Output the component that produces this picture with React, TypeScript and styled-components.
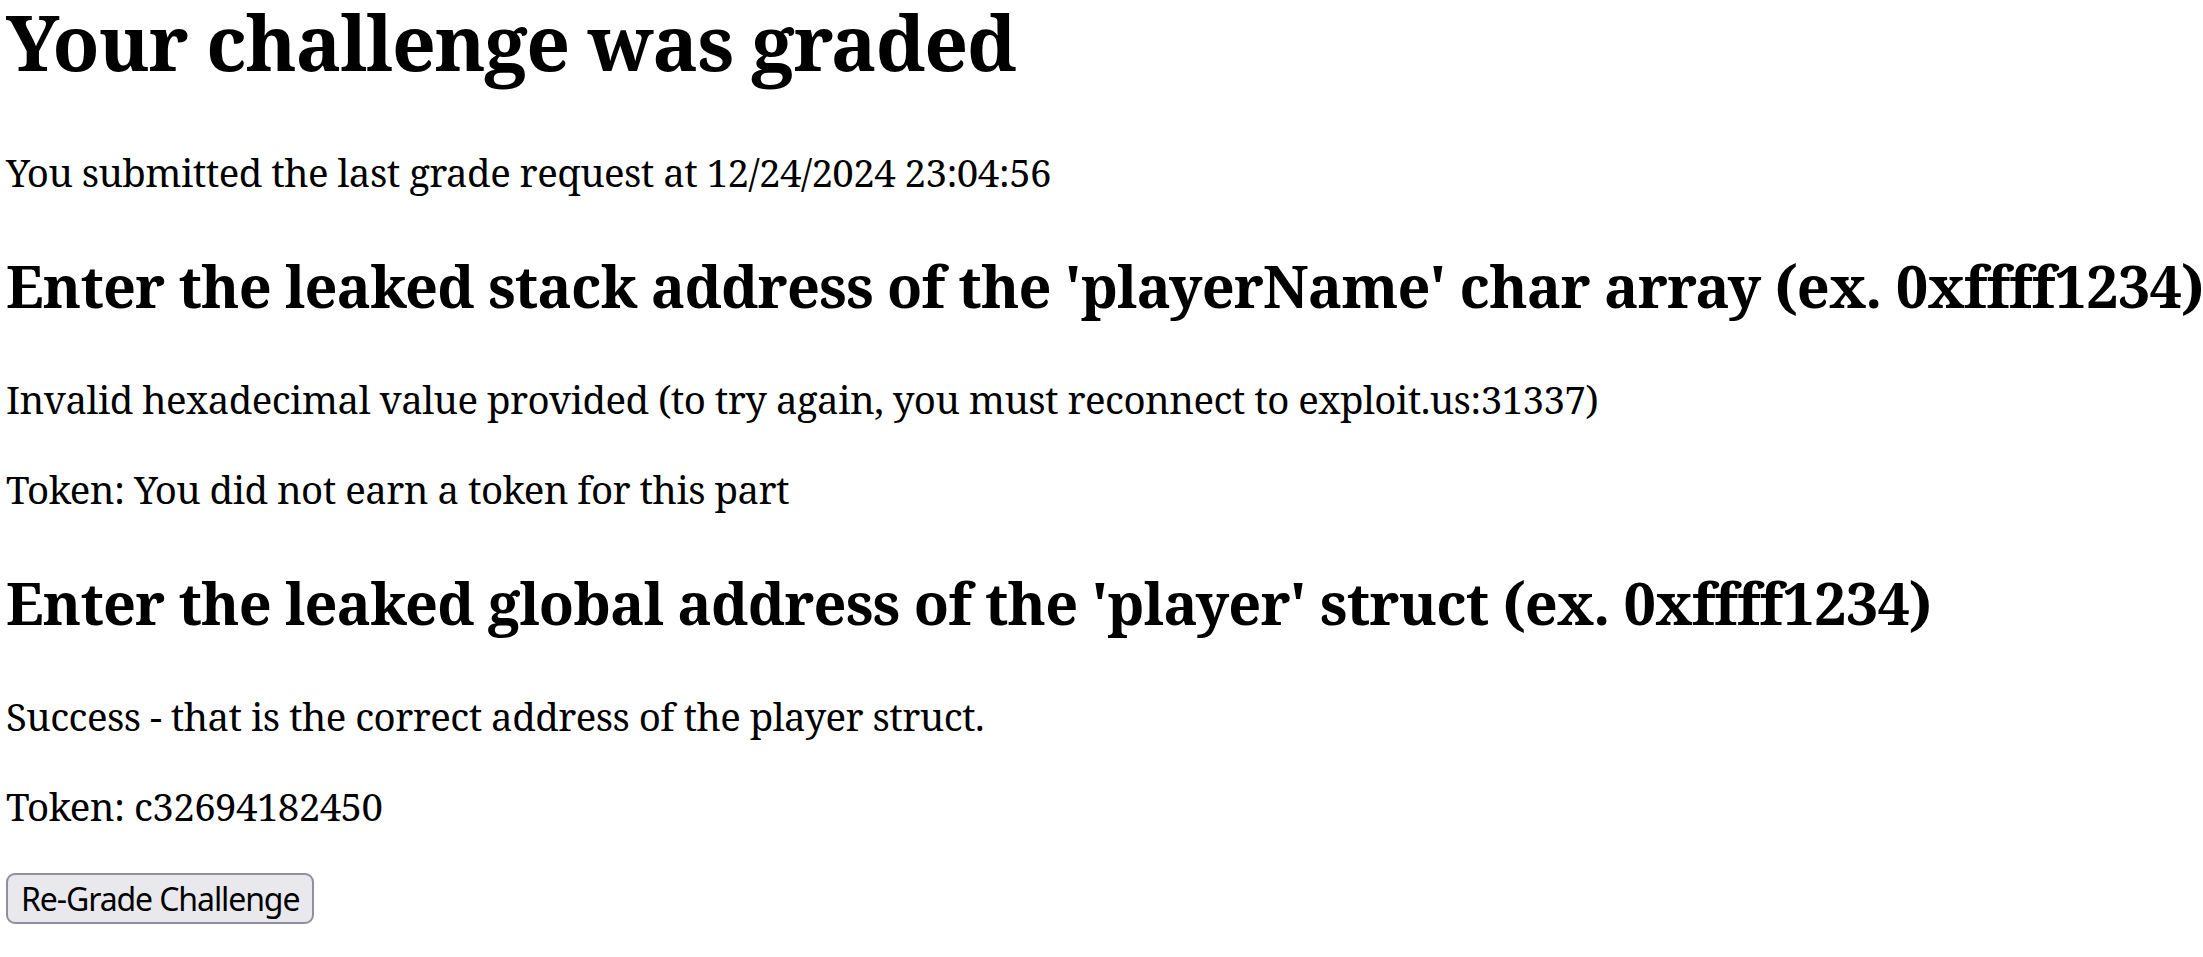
import React from "react";
import styled, { createGlobalStyle } from "styled-components";

const GlobalStyle = createGlobalStyle`
  html, body {
    margin: 0;
    padding: 0;
    background: #ffffff;
  }
  body {
    font-family: "Noto Serif", "DejaVu Serif", "Liberation Serif", serif;
    font-size: 38.4px;
    color: #000000;
  }
`;

const Page = styled.main`
  padding: 0 6px;
`;

const Title = styled.h1`
  font-size: 76.8px;
  font-weight: 700;
  line-height: 84.6px;
  letter-spacing: -0.016em;
  margin: 0 0 61.5px;
`;

const Section = styled.h2`
  font-size: 57.6px;
  font-weight: 700;
  letter-spacing: -0.014em;
  margin: 47.8px 0;
  white-space: nowrap;
`;

const Text = styled.p`
  margin: 38.4px 0;
  letter-spacing: -0.014em;
  white-space: nowrap;
`;

const Form = styled.form`
  margin: 0;
`;

const Button = styled.button`
  font-family: "Noto Sans", "DejaVu Sans", sans-serif;
  font-size: 32px;
  letter-spacing: -1.1px;
  color: #000000;
  background: #e9e9ed;
  border: 2px solid #8f8f9d;
  border-radius: 9px;
  padding: 2px 13px 2px 13px;
  cursor: pointer;
`;

export default function App() {
  return (
    <>
      <GlobalStyle />
      <Page>
        <Title>Your challenge was graded</Title>
        <Text>You submitted the last grade request at 12/24/2024 23:04:56</Text>

        <Section>Enter the leaked stack address of the 'playerName' char array (ex. 0xffff1234)</Section>
        <Text>Invalid hexadecimal value provided (to try again, you must reconnect to exploit.us:31337)</Text>
        <Text>Token: You did not earn a token for this part</Text>

        <Section>Enter the leaked global address of the 'player' struct (ex. 0xffff1234)</Section>
        <Text>Success - that is the correct address of the player struct.</Text>
        <Text>Token: c32694182450</Text>

        <Form onSubmit={(e) => e.preventDefault()}>
          <Button type="submit">Re-Grade Challenge</Button>
        </Form>
      </Page>
    </>
  );
}
